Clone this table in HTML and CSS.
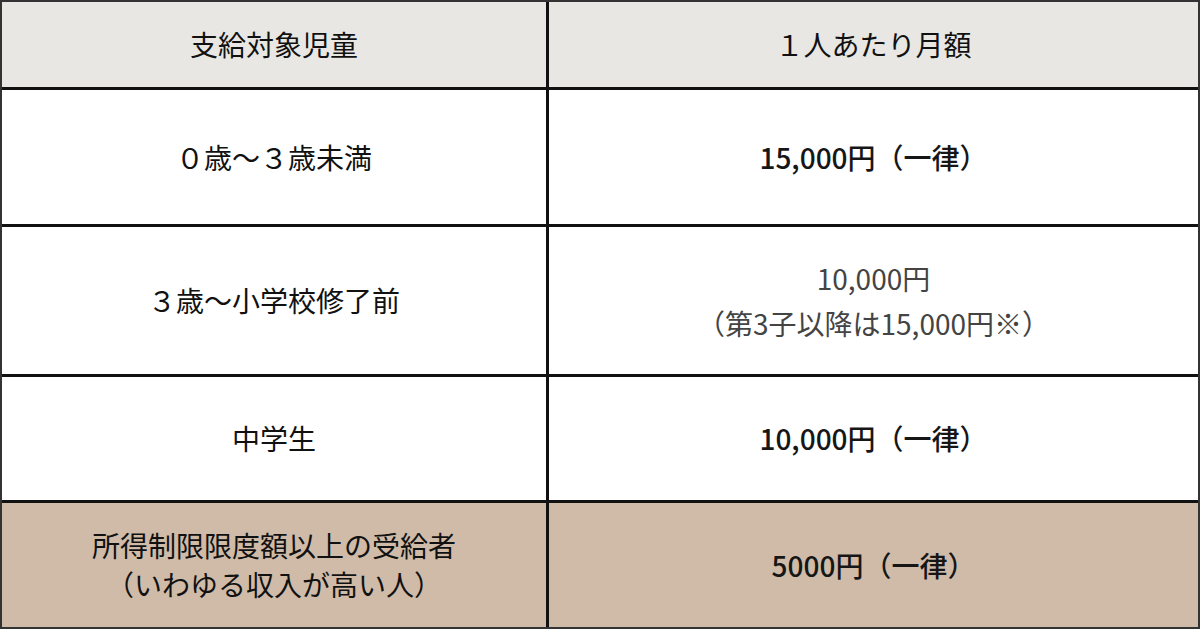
FILE: index.html
```html
<!DOCTYPE html>
<html lang="ja">
<head>
<meta charset="utf-8">
<link rel="stylesheet" href="styles.css">
</head>
<body>
<div class="table">
  <div class="cell head left">支給対象児童</div>
  <div class="cell head">１人あたり月額</div>
  <div class="cell r1 left">０歳〜３歳未満</div>
  <div class="cell r1">15,000円（一律）</div>
  <div class="cell r2 left">３歳〜小学校修了前</div>
  <div class="cell r2 grey">10,000円<br>（第3子以降は15,000円※）</div>
  <div class="cell r3 left">中学生</div>
  <div class="cell r3">10,000円（一律）</div>
  <div class="cell r4 left">所得制限限度額以上の受給者<br>（いわゆる収入が高い人）</div>
  <div class="cell r4">5000円（一律）</div>
</div>
</body>
</html>
```

FILE: styles.css
```css
html, body {
  margin: 0;
  padding: 0;
  background: #fff;
}
.table {
  box-sizing: border-box;
  width: 1200px;
  height: 629px;
  border: 2px solid #333;
  display: grid;
  grid-template-columns: 547px 649px;
  grid-template-rows: 88px 137px 150px 126px 124px;
  font-family: "Noto Sans CJK JP", "Noto Sans", sans-serif;
  font-size: 28px;
  font-weight: 500;
  color: #161616;
}
.cell {
  box-sizing: border-box;
  display: flex;
  align-items: center;
  justify-content: center;
  text-align: center;
  line-height: 45px;
  border-bottom: 3px solid #111;
  background: #fff;
}
.left {
  border-right: 3px solid #111;
  font-weight: 400;
  color: #111;
}
.head {
  background: #e8e7e3;
  font-weight: 400;
  color: #111;
}
.grey {
  color: #444;
  font-weight: 400;
}
.r4 {
  background: #cfbba8;
  border-bottom: none;
  line-height: 39px;
}
```
